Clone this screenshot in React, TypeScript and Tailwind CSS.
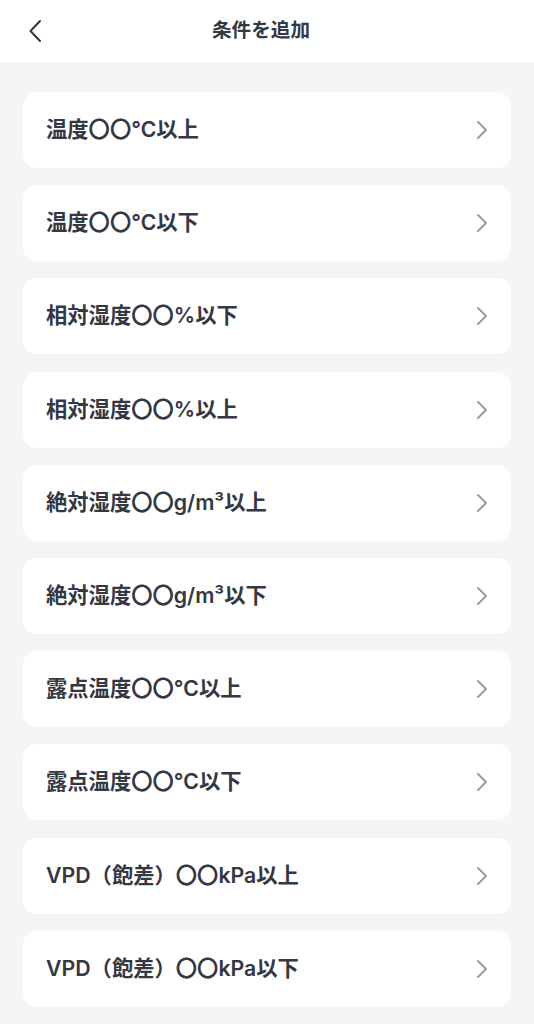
import React from "react";

const items = [
  "温度〇〇℃以上",
  "温度〇〇℃以下",
  "相対湿度〇〇%以下",
  "相対湿度〇〇%以上",
  "絶対湿度〇〇g/m³以上",
  "絶対湿度〇〇g/m³以下",
  "露点温度〇〇℃以上",
  "露点温度〇〇℃以下",
  "VPD（飽差）〇〇kPa以上",
  "VPD（飽差）〇〇kPa以下",
];

export default function App() {
  return (
    <div
      className="w-[534px] min-h-[1024px] bg-[#f5f5f5] flex flex-col"
      style={{ fontFamily: 'Inter, "Noto Sans CJK JP", "Noto Sans", sans-serif' }}
    >
      <header className="h-[62px] bg-white flex items-center relative">
        <button className="absolute left-[20px] top-[16px] w-[30px] h-[30px] flex items-center justify-center">
          <svg width="14" height="24" viewBox="0 0 14 24" fill="none">
            <path d="M12 2 L2.5 12 L12 22" stroke="#2f3440" strokeWidth="2" strokeLinecap="round" strokeLinejoin="round" />
          </svg>
        </button>
        <h1 className="flex-1 text-center text-[19.6px] font-semibold text-[#333843] pr-[12px]">条件を追加</h1>
      </header>
      <main className="flex flex-col gap-[17.2px] px-[23px] pt-[30px]">
        {items.map((t) => (
          <div key={t} className="h-[76px] bg-white rounded-[14px] flex items-center justify-between pl-[23px] pr-[23px]">
            <span className="text-[21.3px] font-semibold text-[#333843]">{t}</span>
            <svg width="12" height="20" viewBox="0 0 12 20" fill="none">
              <path d="M2 2 L10 10 L2 18" stroke="#9a9ca0" strokeWidth="2" strokeLinecap="round" strokeLinejoin="round" />
            </svg>
          </div>
        ))}
      </main>
    </div>
  );
}
